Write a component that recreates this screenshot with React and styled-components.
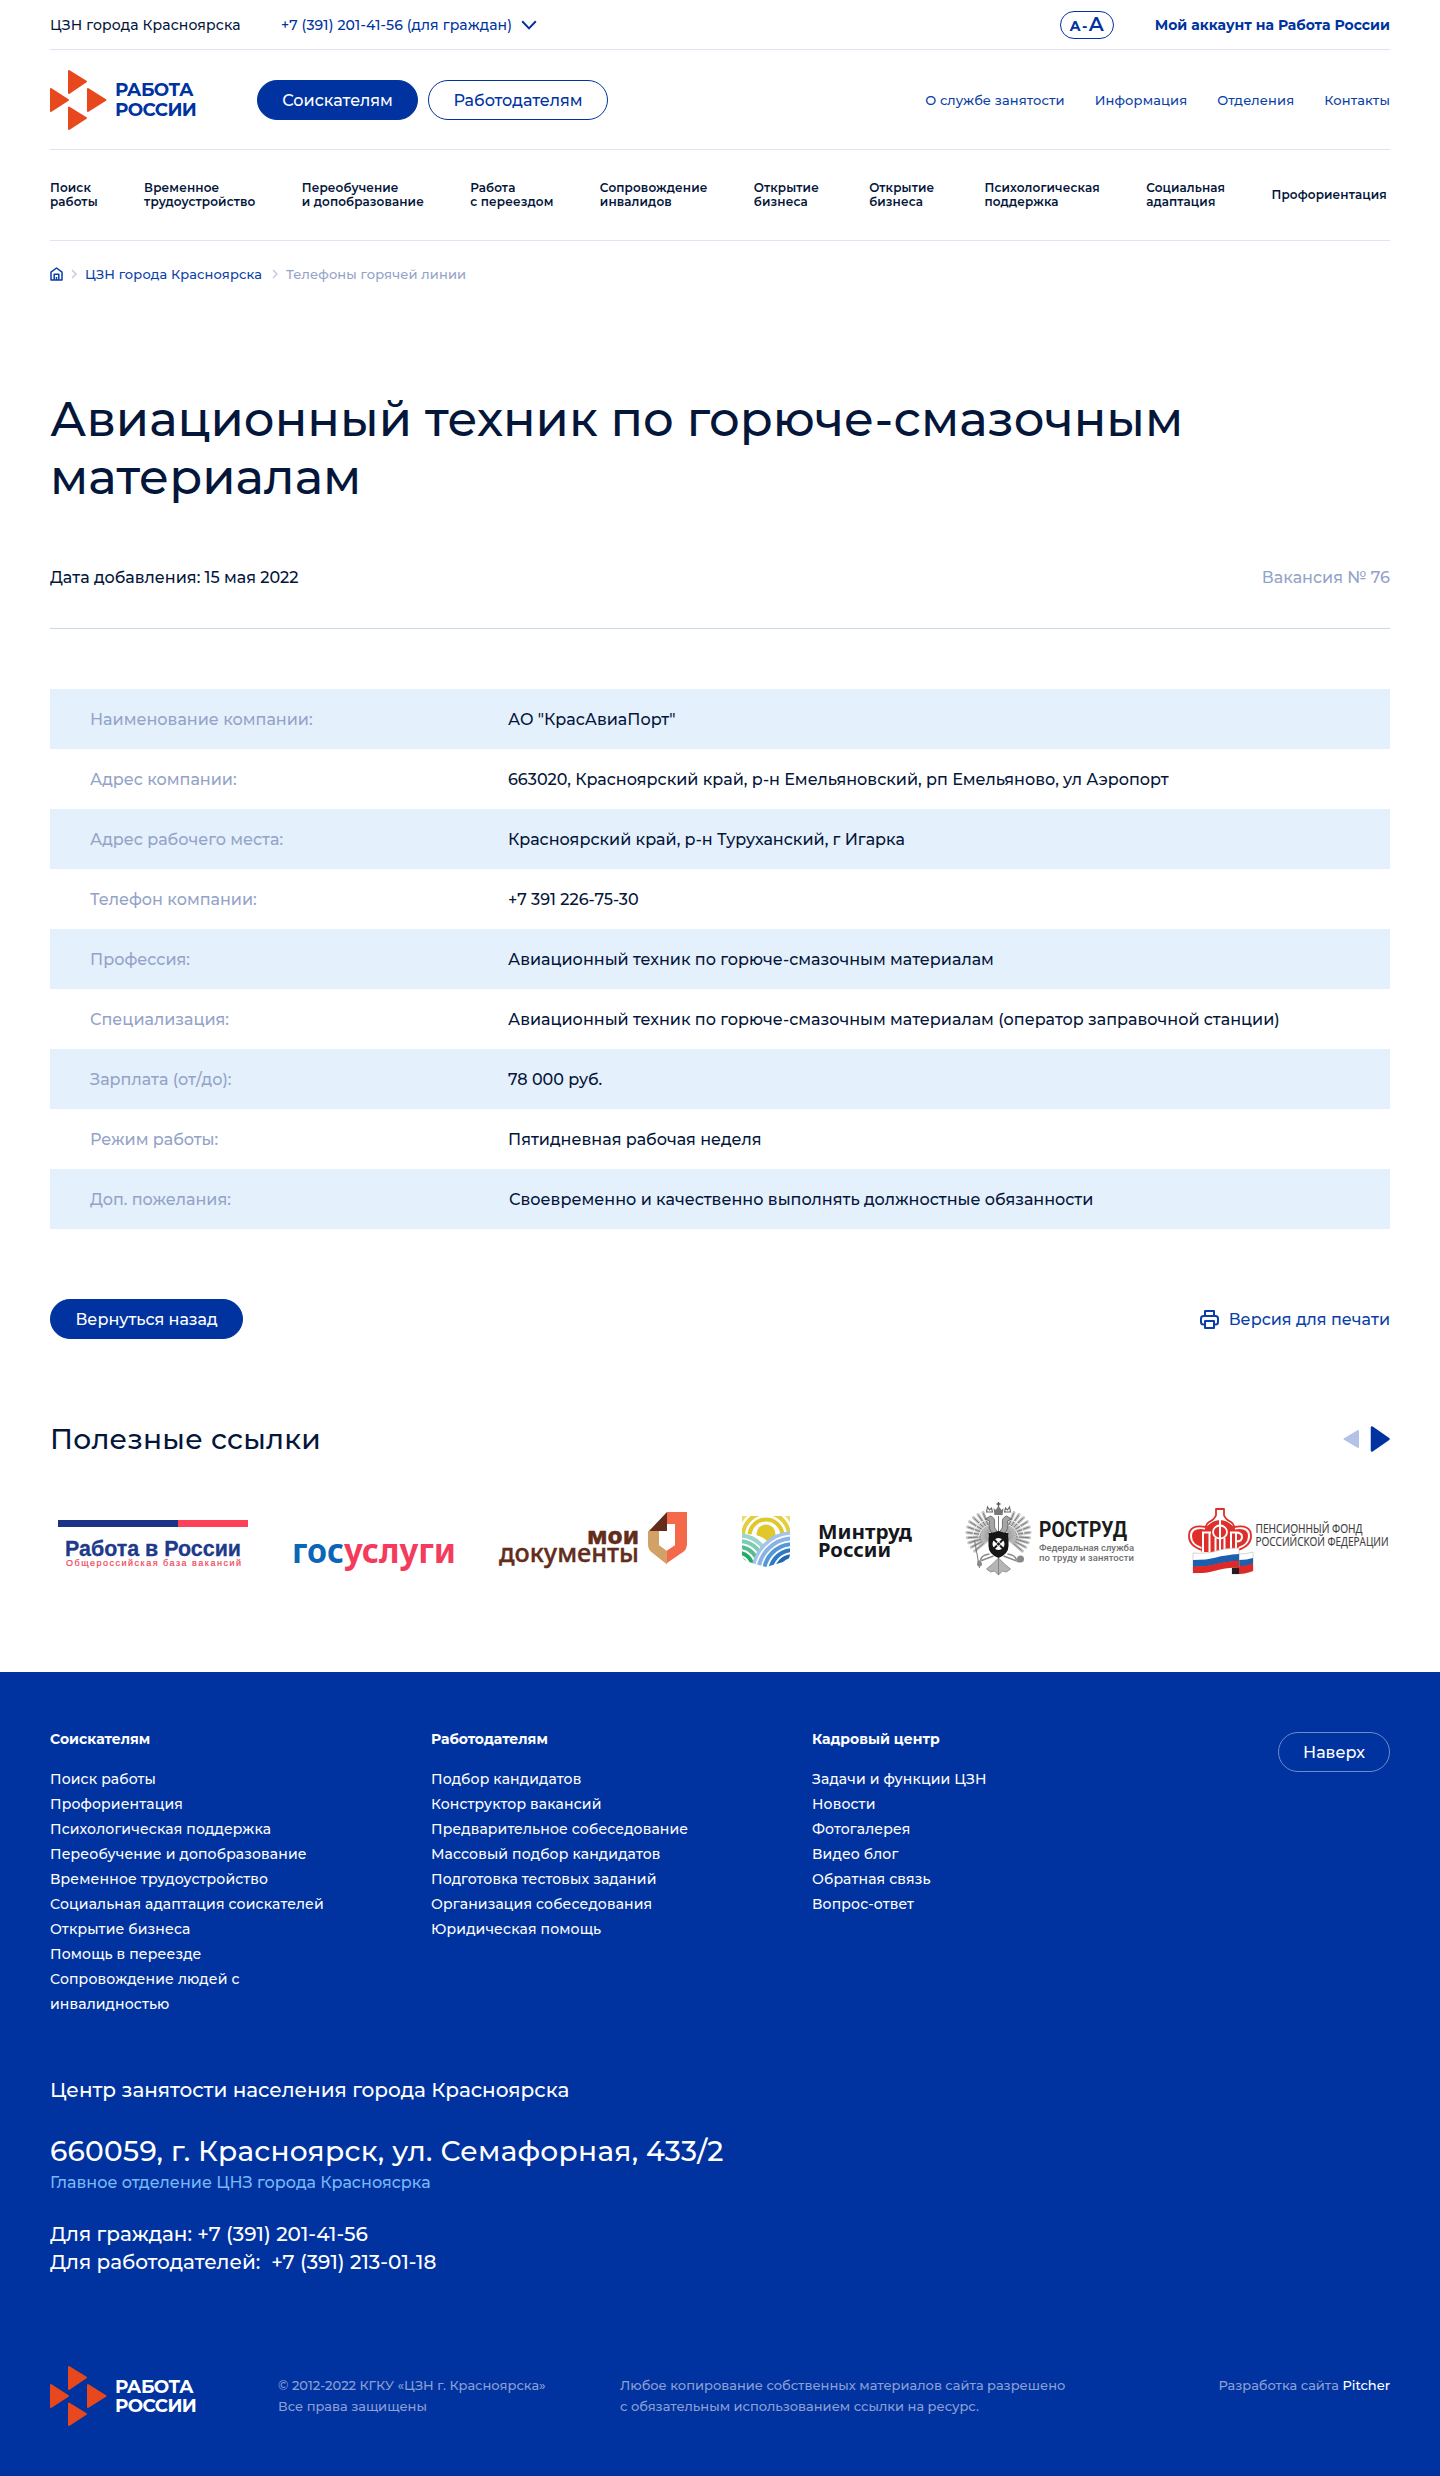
import React from 'react';
import styled, { createGlobalStyle } from 'styled-components';

const c = {
  blue: '#0033a0',
  link: '#0a3fa8',
  ink: '#04163a',
  muted: '#94a3c8',
  line: '#e0e3f2',
  rule: '#c9dae8',
  stripe: '#e4f0fc',
  orange: '#e8481d',
};

const GlobalStyle = createGlobalStyle`
  *, *::before, *::after { box-sizing: border-box; }
  body {
    margin: 0;
    background: #fff;
    color: ${c.ink};
    font-family: Montserrat, Inter, "Open Sans", sans-serif;
    font-size: 16px;
    font-weight: 500;
  }
  a { color: inherit; text-decoration: none; }
  h1, h2, h3, p, ul, dl, dd, dt { margin: 0; padding: 0; }
  ul { list-style: none; }
`;

const Container = styled.div`
  width: 1340px;
  margin: 0 auto;
`;

const TopBar = styled.div`
  display: flex;
  align-items: center;
  height: 50px;
  border-bottom: 1px solid ${c.line};
  font-size: 14px;
  line-height: 20px;
  letter-spacing: 0.01em;
  white-space: nowrap;
`;

const City = styled.span`
  width: 231px;
`;

const Phone = styled.a`
  display: flex;
  align-items: center;
  gap: 9px;
  color: ${c.blue};
`;

const FontSizeToggle = styled.button`
  display: flex;
  align-items: baseline;
  justify-content: center;
  width: 54px;
  height: 28px;
  margin: 0 41px 0 auto;
  padding: 0;
  border: 1.4px solid ${c.blue};
  border-radius: 14px;
  background: none;
  color: ${c.blue};
  font: 700 14px/25px Montserrat, Inter, sans-serif;
`;

const FontMark = styled.span`
  padding: 0 ${(p) => p.$gap || 0}px;
  font-size: ${(p) => p.$size}px;
  font-weight: ${(p) => p.$weight || 700};
`;

const Account = styled.a`
  color: ${c.blue};
  font-weight: 700;
  letter-spacing: 0;
`;

const MainBar = styled.div`
  display: flex;
  align-items: center;
  height: 100px;
  border-bottom: 1px solid ${c.line};
`;

const LogoLink = styled.a`
  display: flex;
  align-items: center;
  gap: 8px;
  width: ${(p) => p.$width}px;
  color: ${(p) => p.$color};
`;

const LogoText = styled.span`
  display: flex;
  flex-direction: column;
  font-size: 18.3px;
  font-weight: 700;
  line-height: 19.4px;
  letter-spacing: -0.03em;
`;

const Pill = styled.a`
  display: inline-flex;
  align-items: center;
  justify-content: center;
  width: ${(p) => p.$width}px;
  height: 40px;
  padding-top: 1px;
  border: 1px solid ${(p) => p.$border || c.blue};
  border-radius: 20px;
  background: ${(p) => (p.$filled ? c.blue : 'transparent')};
  color: ${(p) => p.$color || '#fff'};
  font-size: 16px;
  line-height: 20px;
  white-space: nowrap;
`;

const Switch = styled.div`
  display: flex;
  gap: 10px;

  ${Pill} { padding-top: 2px; }
`;

const ServiceNav = styled.nav`
  display: flex;
  gap: 30px;
  margin-left: auto;
  color: ${c.link};
  font-size: 13px;
  line-height: 20px;
  letter-spacing: 0.01em;
  white-space: nowrap;
`;

const Menu = styled.nav`
  display: flex;
  align-items: center;
  justify-content: space-between;
  height: 91px;
  padding-right: 3px;
  border-bottom: 1px solid ${c.line};
  font-size: 12px;
  font-weight: 600;
  line-height: 14px;
  letter-spacing: 0.01em;
  white-space: nowrap;
`;

const MenuItem = styled.a`
  display: flex;
  flex-direction: column;
  min-width: ${(p) => (p.$wide ? '69px' : 'auto')};
`;

const Crumbs = styled.nav`
  display: flex;
  align-items: center;
  height: 66px;
  font-size: 13px;
  line-height: 20px;
  letter-spacing: 0.01em;
  white-space: nowrap;

  svg { flex: none; }
`;

const Crumb = styled.a`
  color: ${(p) => (p.$current ? c.muted : c.link)};
`;

const CrumbArrow = styled.svg`
  margin: 0 ${(p) => p.$right}px 0 ${(p) => p.$left}px;
`;

const Title = styled.h1`
  width: 1200px;
  margin-top: 83px;
  font-size: 48px;
  font-weight: 500;
  line-height: 58px;
`;

const Meta = styled.div`
  display: flex;
  align-items: center;
  justify-content: space-between;
  margin-top: 36px;
  height: 71px;
  line-height: 20px;
`;

const MetaText = styled.span`
  color: ${(p) => (p.$muted ? c.muted : c.ink)};
`;

const Rule = styled.div`
  height: 1px;
  margin: 15px 0 60px;
  background: ${c.rule};
`;

const Details = styled.dl`
  display: block;
`;

const DetailLabel = styled.dt`
  color: ${c.muted};
`;

const DetailValue = styled.dd``;

const DetailRow = styled.div`
  display: grid;
  grid-template-columns: 418px 1fr;
  align-items: center;
  height: 60px;
  padding: 1px 0 0 40px;
  line-height: 20px;
  white-space: nowrap;

  &:nth-child(odd) { background: ${c.stripe}; }
  &:last-child ${DetailValue} { padding-left: 1px; }
`;

const Actions = styled.div`
  display: flex;
  align-items: center;
  justify-content: space-between;
  margin-top: 70px;
`;

const PrintLink = styled.a`
  display: flex;
  align-items: center;
  gap: 10px;
  padding-top: 1px;
  color: ${c.link};
  line-height: 20px;
`;

const LinksHead = styled.div`
  display: flex;
  align-items: center;
  justify-content: space-between;
  margin-top: 80px;
  height: 40px;
`;

const LinksTitle = styled.h2`
  font-size: 28px;
  font-weight: 500;
  line-height: 40px;
  letter-spacing: 0.01em;
`;

const Arrows = styled.div`
  display: flex;
  align-items: center;
  gap: 11px;
`;

const Partners = styled.div`
  display: flex;
  height: 80px;
  margin: 41px 0 92px;

  svg { display: block; flex: none; }
`;

const Footer = styled.footer`
  height: 804px;
  padding-top: 57px;
  background: ${c.blue};
  color: #fff;
`;

const FooterNav = styled.div`
  display: flex;
  align-items: flex-start;
  height: 319px;
`;

const FooterColumn = styled.div`
  width: 381px;
  font-size: 14px;
`;

const FooterHeading = styled.h3`
  margin-bottom: 17.5px;
  font-size: 14px;
  font-weight: 700;
  line-height: 20px;
`;

const FooterItem = styled.li`
  max-width: 290px;
  line-height: 25px;
  letter-spacing: 0.01em;
`;

const ToTop = styled.div`
  margin: 3px 0 0 auto;
`;

const Contacts = styled.address`
  margin-top: 28px;
  font-style: normal;
  white-space: pre;
`;

const ContactName = styled.p`
  margin-bottom: 29px;
  font-size: 20px;
  line-height: 28px;
`;

const ContactAddress = styled.p`
  font-size: 28px;
  font-weight: 500;
  line-height: 36px;
  letter-spacing: 0.01em;
`;

const ContactNote = styled.p`
  margin: 4px 0 27px;
  color: #78b7f7;
  line-height: 20px;
`;

const ContactPhone = styled.p`
  font-size: 20px;
  line-height: 28px;
`;

const FooterBottom = styled.div`
  display: flex;
  align-items: center;
  height: 60px;
  margin-top: 90px;
  color: #8c9fd3;
  font-size: 13px;
  line-height: 21px;
  white-space: nowrap;
`;

const Legal = styled.p`
  width: ${(p) => p.$width}px;
`;

const Credit = styled.span`
  align-self: flex-start;
  margin: 9px 0 0 auto;

  a { color: #fff; }
`;

function LogoMark() {
  return (
    <svg width="57" height="60" viewBox="0 0 57 60" fill={c.orange} stroke={c.orange} strokeWidth="2" strokeLinejoin="round">
      <path d="M19 1v22l17-11.5z" />
      <path d="M1 19v22l17-11z" />
      <path d="M38 19v22l17.5-11z" />
      <path d="M19 37.5V59l17-11z" />
    </svg>
  );
}

function Logo({ color, width }) {
  return (
    <LogoLink href="#" $color={color} $width={width}>
      <LogoMark />
      <LogoText>
        <span>РАБОТА</span>
        <span>РОССИИ</span>
      </LogoText>
    </LogoLink>
  );
}

function ChevronDown() {
  return (
    <svg width="16" height="10" viewBox="0 0 16 10" fill="none" stroke={c.blue} strokeWidth="2">
      <path d="M1.2 1.2 8 8.4l6.800-7.200" />
    </svg>
  );
}

function HomeIcon() {
  return (
    <svg width="13" height="14" viewBox="0 0 13 14" fill="none" stroke={c.link} strokeWidth="1.5" strokeLinejoin="round">
      <path d="M1 5.200 6.500 1 12 5.200V13H1z" />
      <path d="M4.200 13V7.200h4.600V13M6.500 10v3" />
    </svg>
  );
}

function CrumbChevron({ left, right }) {
  return (
    <CrumbArrow width="6" height="10" viewBox="0 0 6 10" fill="none" stroke="#bcc8e4" strokeWidth="1.4" $left={left} $right={right}>
      <path d="M1 1l4 4-4 4" />
    </CrumbArrow>
  );
}

function PrintIcon() {
  return (
    <svg width="19" height="19" viewBox="0 0 19 19" fill="none" stroke={c.link} strokeWidth="2" strokeLinejoin="round">
      <path d="M5 6V1h9v5" />
      <path d="M5 14.500H3.500C2 14.500 1 13.500 1 12V8.500C1 7 2 6 3.500 6h12C17 6 18 7 18 8.500V12c0 1.500-1 2.500-2.500 2.500H14" />
      <path d="M5 11h9v7H5z" />
    </svg>
  );
}

function RabotaLogo() {
  return (
    <svg width="220" height="80" viewBox="50 0 220 80" fontFamily="'Liberation Sans', Arial, sans-serif">
      <path fill="#1b3386" d="M58 20h120v7H58z" />
      <path fill="#fb4259" d="M178 20h70v7h-70z" />
      <text x="65" y="56" fontSize="22.500" fontWeight="700" fill="#20398b" stroke="#20398b" strokeWidth=".3" textLength="176" lengthAdjust="spacingAndGlyphs">Работа в России</text>
      <text x="66" y="65.500" fontSize="9" fill="#f0455c" stroke="#f0455c" strokeWidth=".2" textLength="175">Общероссийская база вакансий</text>
    </svg>
  );
}

function GosuslugiLogo() {
  return (
    <svg width="207" height="80" viewBox="270 0 207 80" fontFamily="'Noto Sans', 'Open Sans', sans-serif" fontWeight="700" fontSize="33.500">
      <text x="292" y="63" fill="#0b66b6" textLength="52" lengthAdjust="spacingAndGlyphs">гос</text>
      <text x="344" y="63" fill="#f53b5c" textLength="112" lengthAdjust="spacingAndGlyphs">услуги</text>
    </svg>
  );
}

function DocumentsLogo() {
  return (
    <svg width="237" height="80" viewBox="477 0 237 80" fontFamily="'Noto Sans', 'Open Sans', sans-serif" fill="#632c1b">
      <text x="587" y="44" fontSize="23" fontWeight="800" stroke="#632c1b" strokeWidth=".4" textLength="52" lengthAdjust="spacingAndGlyphs">мои</text>
      <text x="499" y="62" fontSize="26" stroke="#632c1b" strokeWidth=".4" textLength="140" lengthAdjust="spacingAndGlyphs">документы</text>
      <path fill="#f4694a" d="M667 12h20v32q0 5-4 8l-16 11V50l8-5V24h-8z" />
      <path fill="#d2a166" d="M648 31h11v14l8 6v13.500l-15-12q-4-3-4-8z" />
      <path fill="#fff" d="M659 31h8v-7h8v21l-8 5.500-8-5.500z" />
      <path fill="#632c1b" d="M667 12v19h-18z" />
    </svg>
  );
}

function MintrudLogo() {
  return (
    <svg width="225" height="80" viewBox="714 0 225 80">
      <defs>
        <clipPath id="mintrud-badge">
          <path d="M742 16h48v38q0 6-7 8l-17 5-17-5q-7-2-7-8z" />
        </clipPath>
      </defs>
      <g clipPath="url(#mintrud-badge)" fill="none" strokeWidth="4">
        <circle cx="766" cy="34" r="9.500" fill="#e0c72c" />
        <circle cx="766" cy="36" r="16.500" stroke="#e0c72c" />
        <circle cx="766" cy="36" r="23" stroke="#e3cd40" />
        <circle cx="766" cy="36" r="29.500" stroke="#ebdc72" />
        <path fill="#fff" d="M740 34q20-1 27 7 10-8 25-8v40h-52z" />
        <g stroke="#22ab63">
          <circle cx="739" cy="66" r="7" />
          <circle cx="739" cy="66" r="13" />
          <circle cx="739" cy="66" r="19" stroke="#53bd8d" />
          <circle cx="739" cy="66" r="25" stroke="#7ccbb2" />
          <circle cx="739" cy="66" r="30.500" stroke="#9bd5cd" />
        </g>
        <circle cx="793" cy="73" r="40" fill="#fff" />
        <g stroke="#2d79c4">
          <circle cx="793" cy="73" r="10" fill="#1a67b5" />
          <circle cx="793" cy="73" r="17" stroke="#1a67b5" />
          <circle cx="793" cy="73" r="23" />
          <circle cx="793" cy="73" r="29" stroke="#5596d4" />
          <circle cx="793" cy="73" r="34.700" stroke="#88b3e2" />
          <circle cx="793" cy="73" r="40" stroke="#a3c3ea" strokeWidth="3.500" />
        </g>
      </g>
      <g fontFamily="'Noto Sans', 'Open Sans', sans-serif" fontSize="19" fontWeight="700" fill="#15171c">
        <text x="818" y="39" textLength="94" lengthAdjust="spacingAndGlyphs">Минтруд</text>
        <text x="818" y="57" textLength="73" lengthAdjust="spacingAndGlyphs">России</text>
      </g>
    </svg>
  );
}

const FEATHERS = [-68, -56, -44, -32, -20, -8, 4, 16, 28, 40];

function Wing() {
  return (
    <g stroke="#9a9a9a" strokeLinecap="round">
      {FEATHERS.map((angle, i) => {
        const a = (angle * Math.PI) / 180;
        const reach = 27 - Math.abs(i - 3) * 0.6;
        const x = Math.cos(a);
        const y = Math.sin(a);
        return (
          <g key={angle}>
            <path strokeWidth="3" opacity=".6" d={`M${6 + x * 6} ${36 + y * 6}L${6 + x * reach} ${36 + y * reach}`} />
            <path strokeWidth=".7" stroke="#5c5c5c" d={`M${6 + x * 12} ${36 + y * 12}L${6 + x * (reach - 1)} ${36 + y * (reach - 1)}`} />
          </g>
        );
      })}
      <path fill="none" stroke="#eee" strokeWidth="1" d="M8 25q9 0 12 12M8 19q16 2 18 17" />
    </g>
  );
}

function EagleHalf() {
  return (
    <g>
      <Wing />
      <path fill="#a5a5a5" stroke="#5a5a5a" strokeWidth=".8" d="M1 32q4-4 3-9t4-7l5 3-4 2q2 8-4 14z" />
      <path fill="none" stroke="#666" strokeWidth="1.100" d="M6 12l1-4 2 2 2-3 1 5z" />
      <path fill="none" stroke="#8a8a8a" strokeWidth="1.400" d="M5 56l8 3 8 3M9 54q8 1 9 6" />
      <path fill="#b5b5b5" stroke="#777" strokeWidth=".7" d="M0 58l6 6 6 5-4 3-4-1-4 4z" />
    </g>
  );
}

function RostrudLogo() {
  return (
    <svg width="222" height="80" viewBox="939 0 222 80">
      <g transform="translate(998.500 0)">
        <EagleHalf />
        <g transform="scale(-1 1)">
          <EagleHalf />
        </g>
        <path stroke="#555" strokeWidth="1.300" d="M0 2v5M-2 4h4" />
        <path fill="#777" d="M-5 8l2 2 3-4 3 4 2-2-1 7h-8z" />
        <path fill="none" stroke="#777" strokeWidth="1" d="M-24 40l5 28M0 16v16" />
        <circle cx="22" cy="59" r="3.500" fill="#888" />
        <circle cx="-19" cy="64" r="2.500" fill="#888" />
        <path fill="#161616" d="M-10 33q5 0 10-2 5 2 10 2v13q0 8-10 12-10-4-10-12z" />
        <circle cy="44" r="6" fill="#fff" />
        <path stroke="#161616" strokeWidth="2" d="M-5-5 5 5M5-5-5 5" transform="translate(0 44)" />
        <circle cy="44" r="2" fill="#161616" stroke="#fff" strokeWidth=".8" />
      </g>
      <text x="1039" y="36.500" fontFamily="Roboto, sans-serif" fontSize="22.500" fontWeight="700" fill="#1c1c1c" textLength="88" lengthAdjust="spacingAndGlyphs">РОСТРУД</text>
      <g fontFamily="Roboto, sans-serif" fontSize="9.500" fontWeight="500" fill="#6f6f6f">
        <text x="1039" y="50.500" textLength="95">Федеральная служба</text>
        <text x="1039" y="60.500" textLength="95">по труду и занятости</text>
      </g>
    </svg>
  );
}

function PensionLogo() {
  return (
    <svg width="229" height="80" viewBox="1161 0 229 80">
      <path
        fill="#fff"
        stroke="#df2f2b"
        strokeWidth="1.800"
        strokeLinejoin="round"
        d="M1216 9h8v6q1 4 7 7 3 2 3 5 17-3 17 9 0 10-13 14h-36q-13-4-13-14 0-12 17-9 0-3 3-5 6-3 7-7z"
      />
      <path fill="#df2f2b" d="M1205 29.500q-13-2-13 6.500 0 8 9.500 11v5h37v-5q9.500-3 9.500-11 0-8.500-13-6.500v-1q-7-8.500-15-8.500t-15 8.500z" />
      <path fill="none" stroke="#fff" strokeWidth="2" d="M1203 52V33M1209.500 52V33M1202 32.500h9M1220 12v40M1215.500 52V38M1224.500 52V38M1231 52V33M1236 52V33M1230 32.500h6q6 0 6 4.500t-6 4.500" />
      <ellipse cx="1220" cy="32" rx="7" ry="6.500" fill="none" stroke="#fff" strokeWidth="1.800" />
      <path fill="#fff" stroke="#bbb" strokeWidth=".6" d="M1239 54q8 0 14-2v19q-10 4-21 3v-5l7-1z" />
      <path fill="#1b5fae" d="M1239 60q8 0 14-2v7q-8 2-14 2z" />
      <path fill="#dd2a27" d="M1239 66q8 0 14-3v8q-8 3-14 3z" />
      <path fill="#2a1b20" d="M1232 66l7-1v9h-7z" />
      <path fill="#fff" stroke="#bbb" strokeWidth=".6" d="M1193 53q14 1 23-2t23-3v19q-12 0-23 3t-23 3z" />
      <path fill="#1b5fae" d="M1193 60q14 0 23-2.500t23-3.500v7q-14 1-23 3.500t-23 2.500z" />
      <path fill="#dd2a27" d="M1193 66.500q14 0 23-2.500t23-3.500v7q-14 0-23 3t-23 2.500z" />
      <g fontFamily="'Open Sans', 'Noto Sans', sans-serif" fontSize="12" fill="#3c3c3c" stroke="#3c3c3c" strokeWidth=".15">
        <text x="1255.500" y="32.500" textLength="107" lengthAdjust="spacingAndGlyphs">ПЕНСИОННЫЙ ФОНД</text>
        <text x="1255.500" y="45.500" textLength="133" lengthAdjust="spacingAndGlyphs">РОССИЙСКОЙ ФЕДЕРАЦИИ</text>
      </g>
    </svg>
  );
}

const MENU = [
  { lines: ['Поиск', 'работы'] },
  { lines: ['Временное', 'трудоустройство'] },
  { lines: ['Переобучение', 'и допобразование'] },
  { lines: ['Работа', 'с переездом'] },
  { lines: ['Сопровождение', 'инвалидов'] },
  { lines: ['Открытие', 'бизнеса'], wide: true },
  { lines: ['Открытие', 'бизнеса'], wide: true },
  { lines: ['Психологическая', 'поддержка'] },
  { lines: ['Социальная', 'адаптация'] },
  { lines: ['Профориентация'] },
];

const SERVICE_LINKS = ['О службе занятости', 'Информация', 'Отделения', 'Контакты'];

const DETAILS = [
  ['Наименование компании:', 'АО "КрасАвиаПорт"'],
  ['Адрес компании:', '663020, Красноярский край, р-н Емельяновский, рп Емельяново, ул Аэропорт'],
  ['Адрес рабочего места:', 'Красноярский край, р-н Туруханский, г Игарка'],
  ['Телефон компании:', '+7 391 226-75-30'],
  ['Профессия:', 'Авиационный техник по горюче-смазочным материалам'],
  ['Специализация:', 'Авиационный техник по горюче-смазочным материалам (оператор заправочной станции)'],
  ['Зарплата (от/до):', '78 000 руб.'],
  ['Режим работы:', 'Пятидневная рабочая неделя'],
  ['Доп. пожелания:', 'Своевременно и качественно выполнять должностные обязанности'],
];

const FOOTER_COLUMNS = [
  {
    title: 'Соискателям',
    items: [
      'Поиск работы',
      'Профориентация',
      'Психологическая поддержка',
      'Переобучение и допобразование',
      'Временное трудоустройство',
      'Социальная адаптация соискателей',
      'Открытие бизнеса',
      'Помощь в переезде',
      <>Сопровождение людей с<br />инвалидностью</>,
    ],
  },
  {
    title: 'Работодателям',
    items: [
      'Подбор кандидатов',
      'Конструктор вакансий',
      'Предварительное собеседование',
      'Массовый подбор кандидатов',
      'Подготовка тестовых заданий',
      'Организация собеседования',
      'Юридическая помощь',
    ],
  },
  {
    title: 'Кадровый центр',
    items: ['Задачи и функции ЦЗН', 'Новости', 'Фотогалерея', 'Видео блог', 'Обратная связь', 'Вопрос-ответ'],
  },
];

export default function App() {
  return (
    <>
      <GlobalStyle />
      <Container>
        <header>
          <TopBar>
            <City>ЦЗН города Красноярска</City>
            <Phone href="#">
              +7 (391) 201-41-56 (для граждан)
              <ChevronDown />
            </Phone>
            <FontSizeToggle type="button">
              <FontMark $size={14}>A</FontMark>
              <FontMark $size={14} $gap={1.5}>-</FontMark>
              <FontMark $size={20} $weight={600}>A</FontMark>
            </FontSizeToggle>
            <Account href="#">Мой аккаунт на Работа России</Account>
          </TopBar>
          <MainBar>
            <Logo color={c.blue} width={207} />
            <Switch>
              <Pill href="#" $width={161} $filled>Соискателям</Pill>
              <Pill href="#" $width={180} $color={c.blue}>Работодателям</Pill>
            </Switch>
            <ServiceNav>
              {SERVICE_LINKS.map((text) => (
                <a href="#" key={text}>{text}</a>
              ))}
            </ServiceNav>
          </MainBar>
          <Menu>
            {MENU.map(({ lines, wide }, i) => (
              <MenuItem href="#" key={i} $wide={wide}>
                {lines.map((text) => (
                  <span key={text}>{text}</span>
                ))}
              </MenuItem>
            ))}
          </Menu>
        </header>

        <Crumbs>
          <HomeIcon />
          <CrumbChevron left={8} right={8} />
          <Crumb href="#">ЦЗН города Красноярска</Crumb>
          <CrumbChevron left={10} right={8} />
          <Crumb $current>Телефоны горячей линии</Crumb>
        </Crumbs>

        <main>
          <Title>Авиационный техник по горюче-смазочным материалам</Title>
          <Meta>
            <MetaText>Дата добавления: 15 мая 2022</MetaText>
            <MetaText $muted>Вакансия № 76</MetaText>
          </Meta>
          <Rule />
          <Details>
            {DETAILS.map(([label, value]) => (
              <DetailRow key={label}>
                <DetailLabel>{label}</DetailLabel>
                <DetailValue>{value}</DetailValue>
              </DetailRow>
            ))}
          </Details>
          <Actions>
            <Pill href="#" $width={193} $filled>Вернуться назад</Pill>
            <PrintLink href="#">
              <PrintIcon />
              Версия для печати
            </PrintLink>
          </Actions>

          <LinksHead>
            <LinksTitle>Полезные ссылки</LinksTitle>
            <Arrows>
              <svg width="16" height="20" viewBox="0 0 16 20" fill="#b3c2e6" stroke="#b3c2e6" strokeWidth="2" strokeLinejoin="round">
                <path d="M15 2v16L1.500 10z" />
              </svg>
              <svg width="20" height="28" viewBox="0 0 20 28" fill={c.blue} stroke={c.blue} strokeWidth="2.500" strokeLinejoin="round">
                <path d="M2 2.500v23L18.500 14z" />
              </svg>
            </Arrows>
          </LinksHead>
          <Partners>
            <RabotaLogo />
            <GosuslugiLogo />
            <DocumentsLogo />
            <MintrudLogo />
            <RostrudLogo />
            <PensionLogo />
          </Partners>
        </main>
      </Container>

      <Footer>
        <Container>
          <FooterNav>
            {FOOTER_COLUMNS.map((column) => (
              <FooterColumn key={column.title}>
                <FooterHeading>{column.title}</FooterHeading>
                <ul>
                  {column.items.map((item, i) => (
                    <FooterItem key={i}>{item}</FooterItem>
                  ))}
                </ul>
              </FooterColumn>
            ))}
            <ToTop>
              <Pill href="#" $width={112} $border="#6d8ccb">Наверх</Pill>
            </ToTop>
          </FooterNav>

          <Contacts>
            <ContactName>Центр занятости населения города Красноярска</ContactName>
            <ContactAddress>660059, г. Красноярск, ул. Семафорная, 433/2</ContactAddress>
            <ContactNote>Главное отделение ЦНЗ города Красноясрка</ContactNote>
            <ContactPhone>Для граждан: +7 (391) 201-41-56</ContactPhone>
            <ContactPhone>{'Для работодателей:  +7 (391) 213-01-18'}</ContactPhone>
          </Contacts>

          <FooterBottom>
            <Logo color="#fff" width={228} />
            <Legal $width={342}>
              © 2012-2022 КГКУ «ЦЗН г. Красноярска»<br />
              Все права защищены
            </Legal>
            <Legal $width={460}>
              Любое копирование собственных материалов сайта разрешено<br />
              с обязательным использованием ссылки на ресурс.
            </Legal>
            <Credit>Разработка сайта <a href="#">Pitcher</a></Credit>
          </FooterBottom>
        </Container>
      </Footer>
    </>
  );
}
